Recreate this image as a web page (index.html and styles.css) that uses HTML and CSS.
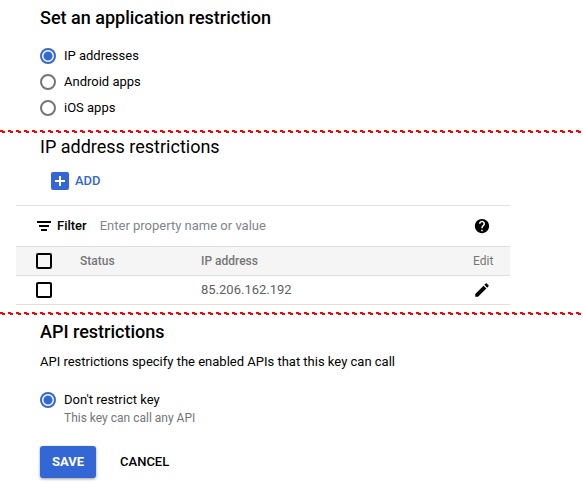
FILE: index.html
```html
<!DOCTYPE html>
<html lang="en">
<head>
    <meta charset="UTF-8">
    <meta name="viewport" content="width=device-width, initial-scale=1.0">
    <title>API key restrictions</title>
    <link rel="stylesheet" href="styles.css">
</head>
<body>

    <form class="key-form">
        <section class="section">
            <h2 class="title">Set an application restriction</h2>
            <div class="options">
                <label class="option"><input type="radio" name="application" checked> IP addresses</label>
                <label class="option"><input type="radio" name="application"> Android apps</label>
                <label class="option"><input type="radio" name="application"> iOS apps</label>
            </div>
        </section>

        <section class="section divided addresses">
            <h2 class="title light">IP address restrictions</h2>
            <button type="button" class="add-button">
                <svg width="18" height="18" viewBox="0 0 18 18" aria-hidden="true">
                    <rect width="18" height="18" rx="2" fill="#3367d6"/>
                    <path d="M8 4h2v4h4v2h-4v4H8v-4H4V8h4z" fill="#fff"/>
                </svg>
                ADD
            </button>

            <div class="table-card">
                <div class="filter-bar">
                    <svg width="14" height="10" viewBox="0 0 14 10" aria-hidden="true">
                        <path d="M0 0h14v2H0zM2 4h10v2H2zM4 8h6v2H4z"/>
                    </svg>
                    <label for="filter">Filter</label>
                    <input type="text" id="filter" placeholder="Enter property name or value">
                    <button type="button" class="icon-button" aria-label="Help">
                        <svg width="18" height="18" viewBox="0 0 24 24">
                            <path d="M12 2.500C6.700 2.500 2.500 6.700 2.500 12s4.200 9.500 9.500 9.500 9.500-4.200 9.500-9.500S17.300 2.500 12 2.500zm1 16.500h-2v-2h2v2zm2.070-7.750l-.9.92C13.450 12.900 13 13.500 13 15h-2v-.5c0-1.100.45-2.100 1.170-2.830l1.240-1.260c.37-.36.59-.86.59-1.410 0-1.100-.9-2-2-2s-2 .9-2 2H8c0-2.210 1.790-4 4-4s4 1.790 4 4c0 .88-.36 1.680-.93 2.250z"/>
                        </svg>
                    </button>
                </div>
                <table class="ip-table">
                    <thead>
                        <tr>
                            <th class="col-check"><input type="checkbox" aria-label="Select all"></th>
                            <th class="col-status">Status</th>
                            <th>IP address</th>
                            <th class="col-edit">Edit</th>
                        </tr>
                    </thead>
                    <tbody>
                        <tr>
                            <td class="col-check"><input type="checkbox" aria-label="Select 85.206.162.192"></td>
                            <td></td>
                            <td>85.206.162.192</td>
                            <td class="col-edit">
                                <button type="button" class="icon-button" aria-label="Edit">
                                    <svg width="18" height="18" viewBox="0 0 24 24">
                                        <path d="M3 17.25V21h3.75L17.81 9.94l-3.75-3.75L3 17.25zM20.71 7.04c.39-.39.39-1.02 0-1.41l-2.34-2.34c-.39-.39-1.02-.39-1.41 0l-1.83 1.83 3.75 3.75 1.83-1.83z"/>
                                    </svg>
                                </button>
                            </td>
                        </tr>
                    </tbody>
                </table>
            </div>
        </section>

        <section class="section divided">
            <h2 class="title">API restrictions</h2>
            <p class="description">API restrictions specify the enabled APIs that this key can call</p>
            <label class="option"><input type="radio" name="api" aria-describedby="api-hint" checked> Don't restrict key</label>
            <p class="hint" id="api-hint">This key can call any API</p>
            <div class="actions">
                <button type="button" class="button primary">SAVE</button>
                <button type="button" class="button">CANCEL</button>
            </div>
        </section>
    </form>

</body>
</html>
```

FILE: styles.css
```css
body {
    margin: 0;
    background-color: #fff;
    color: #000;
    font-family: Roboto, "Liberation Sans", sans-serif;
    font-size: 13px;
    line-height: 20px;
}
h2, p {
    margin: 0;
}
input, button {
    margin: 0;
    font: inherit;
}
button {
    padding: 0;
    border: none;
    background: none;
    color: inherit;
    cursor: pointer;
}
svg {
    display: block;
    flex: none;
}

.section {
    padding: 6px 40px 12px;
}
/* red dotted rule above the section */
.divided {
    padding-top: 8px;
    padding-bottom: 7px;
    background-image:
        linear-gradient(90deg, #f00 3px, transparent 3px),
        linear-gradient(90deg, transparent 2px, #f00 2px, #f00 5px, transparent 5px);
    background-repeat: repeat-x;
    background-size: 8px 2px;
    background-position: 0 0, 0 1px;
}
.addresses {
    padding-top: 5px;
}
.title {
    font-size: 18px;
    font-weight: 500;
    line-height: 24px;
}
.light {
    font-weight: 400;
}

.options {
    display: grid;
    gap: 6px;
    padding-top: 16px;
}
.option {
    display: flex;
    align-items: center;
    gap: 8px;
}
input[type="radio"] {
    appearance: none;
    width: 16px;
    height: 16px;
    border: 2px solid #757575;
    border-radius: 50%;
}
input[type="radio"]:checked {
    border-color: #3367d6;
    background: radial-gradient(circle, #3367d6 4px, transparent 5px);
}
input[type="checkbox"] {
    appearance: none;
    display: block;
    width: 16px;
    height: 16px;
    border: 2px solid #000;
    border-radius: 2px;
}

.add-button {
    display: flex;
    align-items: center;
    gap: 6px;
    margin: 12px 11px 14px;
    color: #3367d6;
    font-weight: 500;
}

.table-card {
    margin: 0 33px 0 -24px;
    border-top: 1px solid #e0e0e0;
}
.filter-bar {
    display: flex;
    align-items: center;
    height: 40px;
    padding: 0 19px 0 21px;
}
.filter-bar label {
    margin: 0 13px 0 6px;
    font-weight: 500;
}
.filter-bar input {
    flex: 1;
    min-width: 0;
    padding: 0;
    border: none;
    outline: none;
}
.filter-bar input::placeholder {
    color: #80868b;
}

.ip-table {
    width: 100%;
    table-layout: fixed;
    border-collapse: collapse;
    border-top: 1px solid #e0e0e0;
    color: #616161;
}
.ip-table th, .ip-table td {
    height: 28px;
    padding: 0;
    border-bottom: 1px solid #e0e0e0;
    text-align: left;
}
.ip-table th {
    background-color: #f5f5f5;
    color: #757575;
    font-size: 12px;
    font-weight: 500;
}
.ip-table .col-check {
    width: 44px;
    padding-left: 20px;
}
.col-status {
    width: 121px;
}
.ip-table .col-edit {
    width: 37px;
    font-weight: 400;
}
.ip-table .icon-button {
    display: block;
    color: #000;
}

.description {
    padding: 8px 0 18px;
}
.hint {
    padding-left: 24px;
    color: #757575;
    font-size: 12px;
    line-height: 16px;
}
.actions {
    display: flex;
    padding-top: 20px;
}
.button {
    height: 32px;
    padding: 0 12px;
    border-radius: 3px;
    font-weight: 500;
}
.primary {
    margin-right: 12px;
    background-color: #3367d6;
    box-shadow: 0 1px 3px rgba(0, 0, 0, 0.4);
    color: #fff;
    font-weight: 700;
}
```
